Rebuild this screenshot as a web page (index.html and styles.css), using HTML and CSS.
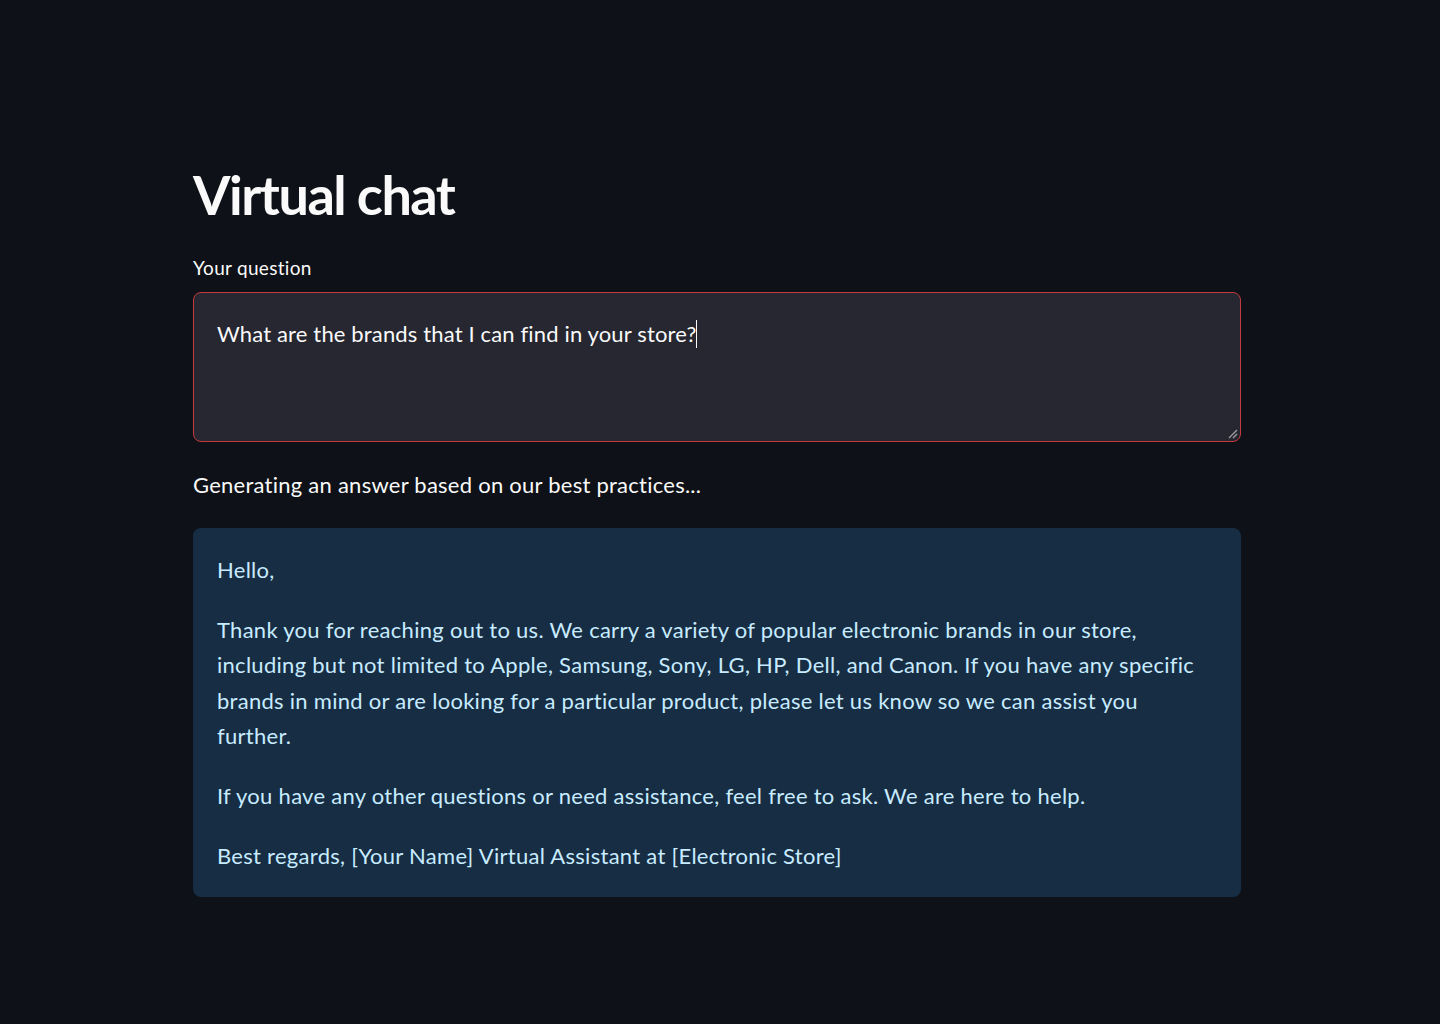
FILE: index.html
```html
<!DOCTYPE html>
<html lang="en">
<head>
<meta charset="utf-8">
<title>Virtual chat</title>
<link rel="stylesheet" href="styles.css">
</head>
<body>
<main class="main">
  <h1 class="title">Virtual chat</h1>
  <label class="label" for="q">Your question</label>
  <div class="textarea-wrap">
    <div class="textarea" id="q">What are the brands that I can find in your store?<span class="caret"></span></div>
    <svg class="grip" width="12" height="12" viewBox="0 0 12 12"><path d="M3 11 L11 3 M7 11 L11 7" stroke="#9a9aa0" stroke-width="1.4" fill="none"/></svg>
  </div>
  <p class="status">Generating an answer based on our best practices...</p>
  <div class="info">
    <p>Hello,</p>
    <p>Thank you for reaching out to us. We carry a variety of popular electronic brands in our store, including but not limited to Apple, Samsung, Sony, LG, HP, Dell, and Canon. If you have any specific brands in mind or are looking for a particular product, please let us know so we can assist you further.</p>
    <p>If you have any other questions or need assistance, feel free to ask. We are here to help.</p>
    <p>Best regards, [Your Name] Virtual Assistant at [Electronic Store]</p>
  </div>
</main>
</body>
</html>
```
FILE: styles.css
```css
html, body {
  margin: 0;
  padding: 0;
  background: #0e1117;
  color: #fafafa;
  font-family: Lato, "Liberation Sans", sans-serif;
  height: 100%;
}
.main {
  width: 1048px;
  margin-left: calc(50% - 527px);
  padding-top: 162px;
  display: flex;
  flex-direction: column;
}
.title {
  margin: 0;
  font-size: 54px;
  font-weight: 700;
  line-height: 66px;
  letter-spacing: -1.5px;
}
.label {
  margin-top: 27px;
  font-size: 19px;
  line-height: 26px;
  letter-spacing: 0.3px;
}
.textarea-wrap {
  position: relative;
  margin-top: 11px;
}
.textarea {
  box-sizing: border-box;
  height: 150px;
  background: #262730;
  border: 1px solid #c4393d;
  border-radius: 8px;
  padding: 25px 23px;
  font-size: 22px;
  line-height: 32px;
  letter-spacing: 0.15px;
  color: #fafafa;
}
.caret {
  display: inline-block;
  width: 1px;
  height: 28px;
  background: #fafafa;
  vertical-align: -6px;
}
.grip {
  position: absolute;
  right: 3px;
  bottom: 3px;
}
.status {
  margin: 28px 0 0;
  font-size: 22px;
  line-height: 30px;
  letter-spacing: 0.25px;
}
.info {
  margin-top: 28px;
  background: #172d43;
  border-radius: 8px;
  padding: 24px 32px 24px 24px;
  color: #c7ebff;
  font-size: 22px;
  line-height: 35.6px;
  letter-spacing: 0.28px;
}
.info p {
  margin: 0 0 24px;
}
.info p:last-child {
  margin-bottom: 0;
}
```
